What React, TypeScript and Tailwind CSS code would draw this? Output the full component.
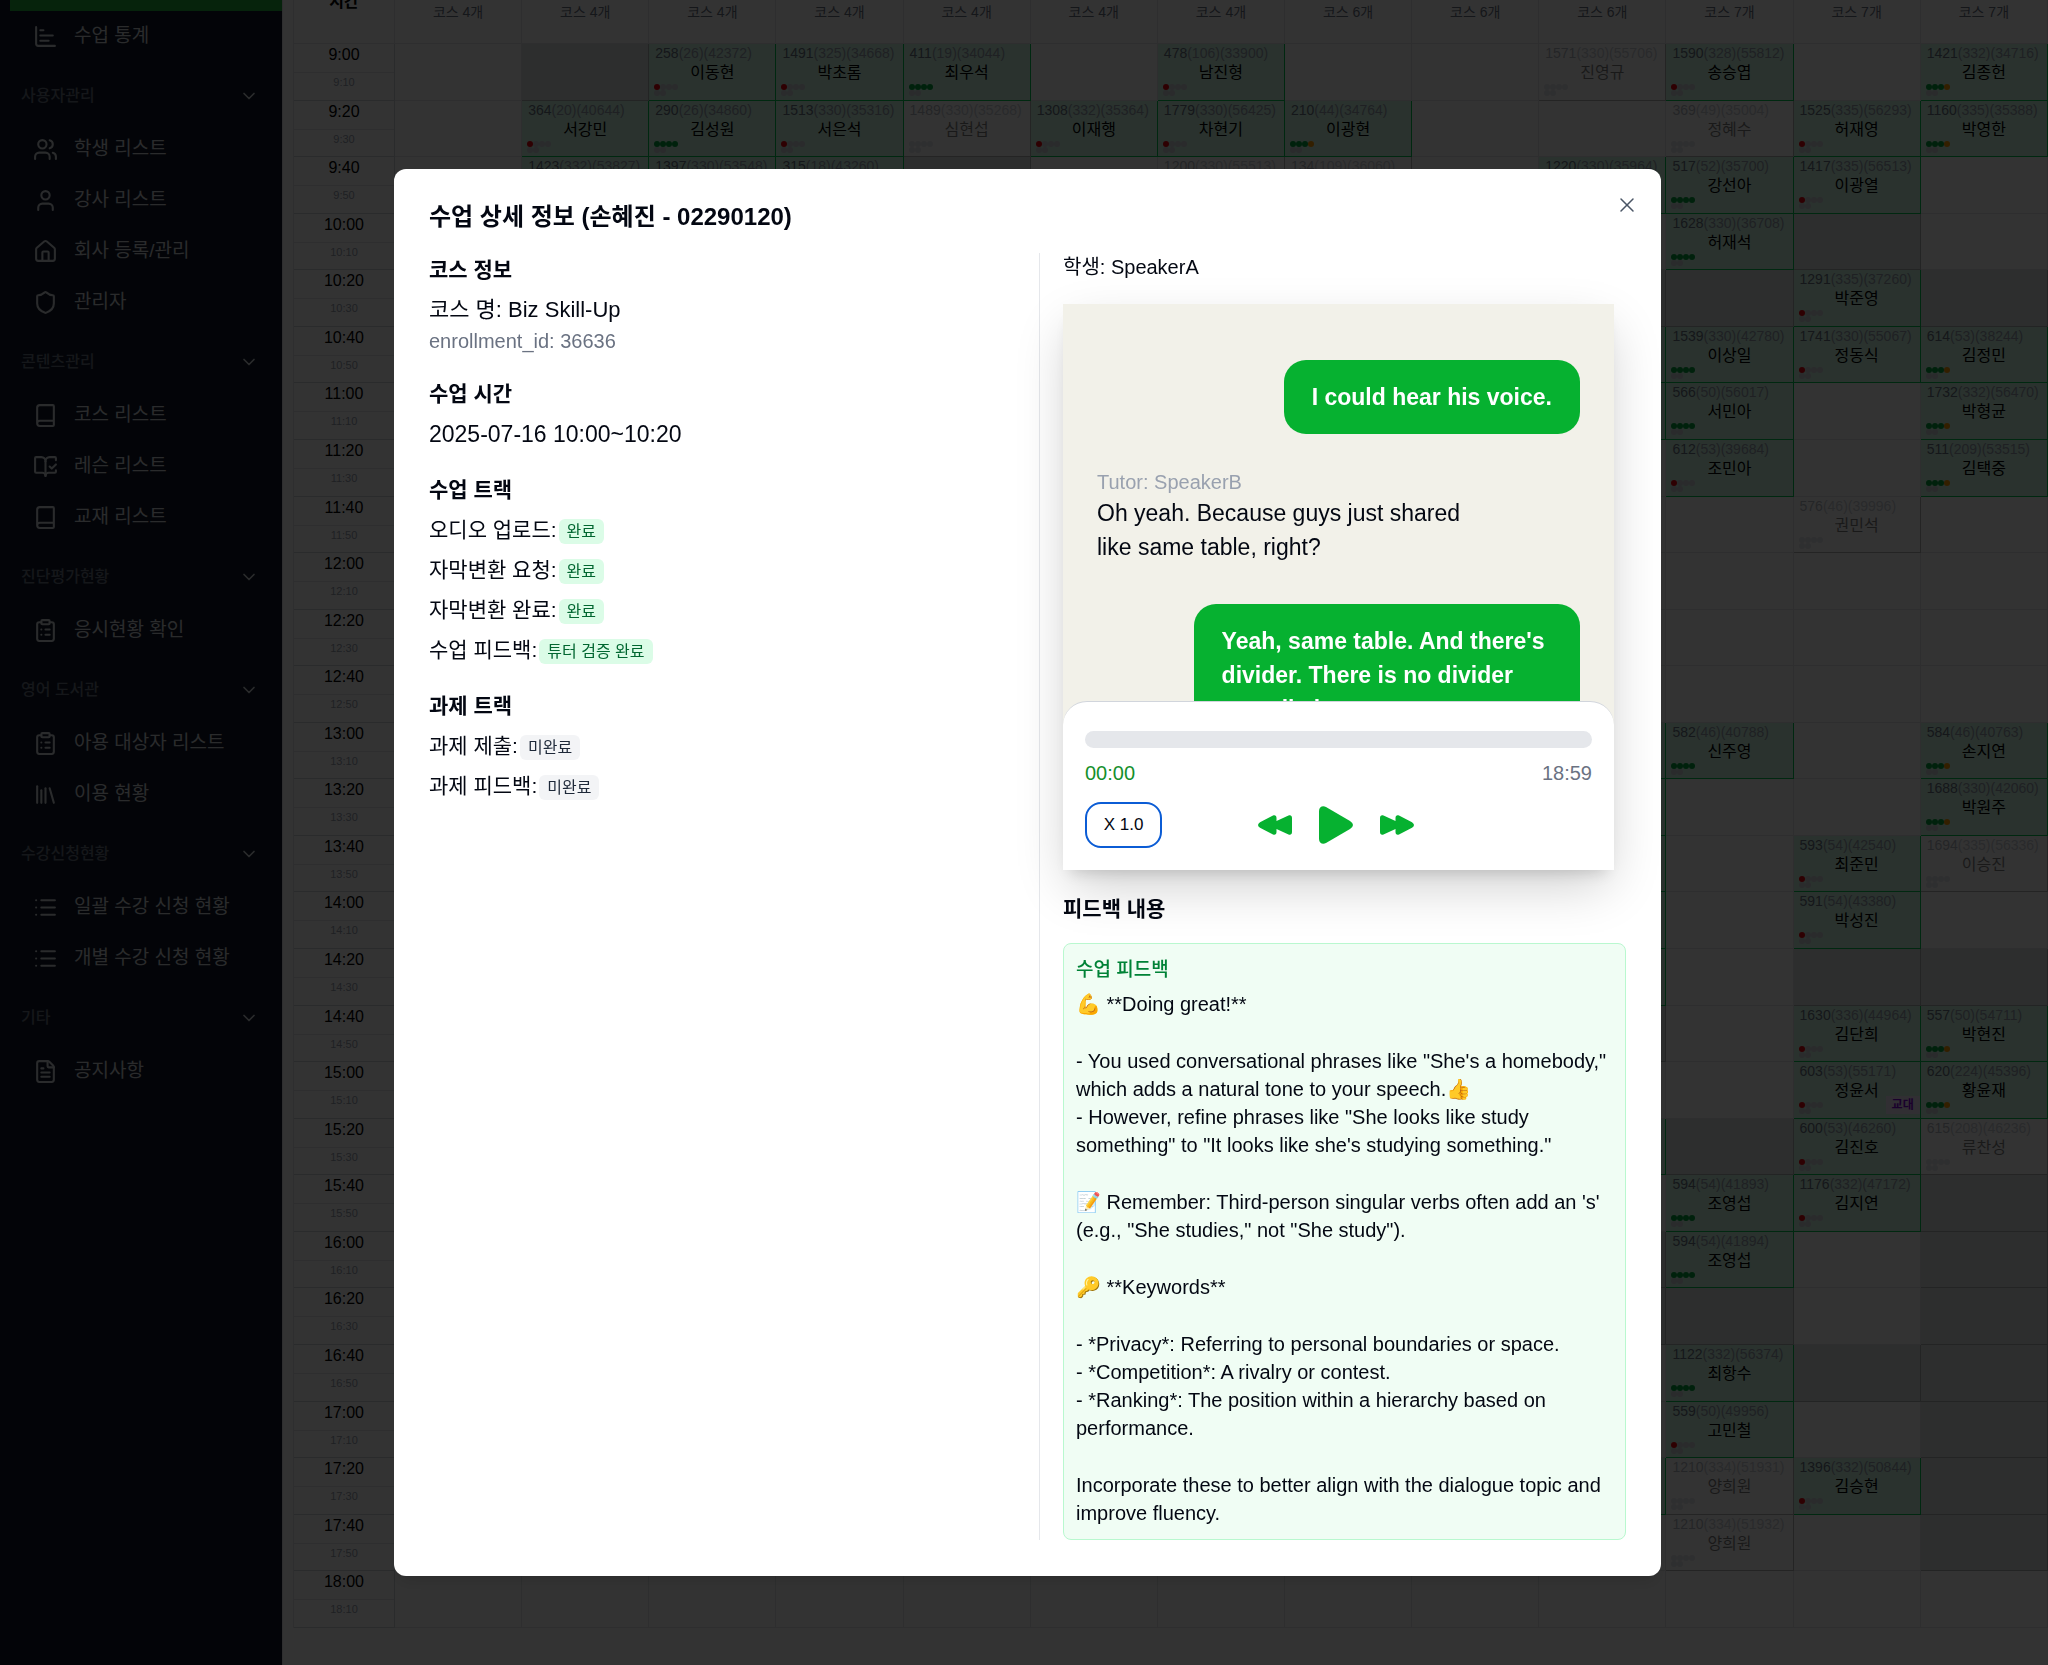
import React from "react";
import {
  BookOpenCheck,
  Book,
  ChartBar,
  ChevronDown,
  ClipboardList,
  FileText,
  House,
  Library,
  List,
  Shield,
  User,
  Users,
  X,
  type LucideIcon,
} from "lucide-react";

type Item = { label: string; icon: LucideIcon };
type Group = { title: string; items: Item[] };

const GROUPS: Group[] = [
  {
    title: "사용자관리",
    items: [
      { label: "학생 리스트", icon: Users },
      { label: "강사 리스트", icon: User },
      { label: "회사 등록/관리", icon: House },
      { label: "관리자", icon: Shield },
    ],
  },
  {
    title: "콘텐츠관리",
    items: [
      { label: "코스 리스트", icon: Book },
      { label: "레슨 리스트", icon: BookOpenCheck },
      { label: "교재 리스트", icon: Book },
    ],
  },
  { title: "진단평가현황", items: [{ label: "응시현황 확인", icon: ClipboardList }] },
  {
    title: "영어 도서관",
    items: [
      { label: "아용 대상자 리스트", icon: ClipboardList },
      { label: "이용 현황", icon: Library },
    ],
  },
  {
    title: "수강신청현황",
    items: [
      { label: "일괄 수강 신청 현황", icon: List },
      { label: "개별 수강 신청 현황", icon: List },
    ],
  },
  { title: "기타", items: [{ label: "공지사항", icon: FileText }] },
];

function NavItem({ item }: { item: Item }) {
  const Icon = item.icon;
  return (
    <a href="#" className="flex h-[51px] items-center gap-4 pl-[33px] text-[19px] text-gray-300">
      <Icon size={25} strokeWidth={2} />
      <span>{item.label}</span>
    </a>
  );
}

function Sidebar() {
  return (
    <nav className="w-[282px] shrink-0 bg-gray-900">
      <div className="ml-[10px] h-[11px] bg-[#22b03c]" />
      <NavItem item={{ label: "수업 통계", icon: ChartBar }} />
      {GROUPS.map((g) => (
        <section key={g.title} className="mt-5">
          <button className="mb-[14px] flex h-7 w-full items-center justify-between pr-[23px] pl-[21px] text-[16px] font-medium text-gray-500">
            <span>{g.title}</span>
            <ChevronDown size={20} className="text-gray-300" />
          </button>
          {g.items.map((i) => (
            <NavItem key={i.label} item={i} />
          ))}
        </section>
      ))}
    </nav>
  );
}

type Status = "red" | "green" | "orange" | "muted" | "off" | "filled";
type Slot = { s: Status; id?: string; rest?: string; name?: string; tag?: string };

const lesson = (s: Status, id: string, rest: string, name?: string, tag?: string): Slot => ({ s, id, rest, name, tag });
const off: Slot = { s: "off" };
const filled: Slot = { s: "filled" };

const COLUMNS: { courses: number; slots: Record<number, Slot> }[] = [
  { courses: 4, slots: {} },
  {
    courses: 4,
    slots: {
      0: off,
      1: lesson("red", "364", "(20)(40644)", "서강민"),
      2: lesson("filled", "1423", "(332)(53827)"),
    },
  },
  {
    courses: 4,
    slots: {
      0: lesson("red", "258", "(26)(42372)", "이동현"),
      1: lesson("green", "290", "(26)(34860)", "김성원"),
      2: lesson("filled", "1397", "(330)(53548)"),
    },
  },
  {
    courses: 4,
    slots: {
      0: lesson("red", "1491", "(325)(34668)", "박초롬"),
      1: lesson("red", "1513", "(330)(35316)", "서은석"),
      2: lesson("filled", "315", "(18)(43260)"),
    },
  },
  {
    courses: 4,
    slots: {
      0: lesson("green", "411", "(19)(34044)", "최우석"),
      1: lesson("muted", "1489", "(330)(35268)", "심현섭"),
      2: off,
    },
  },
  { courses: 4, slots: { 1: lesson("red", "1308", "(332)(35364)", "이재행") } },
  {
    courses: 4,
    slots: {
      0: lesson("red", "478", "(106)(33900)", "남진형"),
      1: lesson("red", "1779", "(330)(56425)", "차현기"),
      2: lesson("muted", "1200", "(330)(55513)"),
    },
  },
  {
    courses: 6,
    slots: {
      1: lesson("orange", "210", "(44)(34764)", "이광현"),
      2: lesson("muted", "134", "(109)(36060)"),
    },
  },
  { courses: 6, slots: {} },
  {
    courses: 6,
    slots: {
      0: lesson("muted", "1571", "(330)(55706)", "진영규"),
      2: lesson("filled", "1220", "(330)(35964)"),
      4: off,
      5: filled,
      6: filled,
      12: filled,
      13: filled,
      14: filled,
      15: filled,
      16: filled,
      17: off,
      19: filled,
      21: off,
      22: off,
      25: filled,
    },
  },
  {
    courses: 7,
    slots: {
      0: lesson("red", "1590", "(328)(55812)", "송승엽"),
      1: lesson("muted", "369", "(49)(35004)", "정혜수"),
      2: lesson("green", "517", "(52)(35700)", "강선아"),
      3: lesson("green", "1628", "(330)(36708)", "허재석"),
      4: off,
      5: lesson("green", "1539", "(330)(42780)", "이상일"),
      6: lesson("green", "566", "(50)(56017)", "서민아"),
      7: lesson("red", "612", "(53)(39684)", "조민아"),
      12: lesson("green", "582", "(46)(40788)", "신주영"),
      19: off,
      20: lesson("green", "594", "(54)(41893)", "조영섭"),
      21: lesson("green", "594", "(54)(41894)", "조영섭"),
      22: off,
      23: lesson("green", "1122", "(332)(56374)", "최항수"),
      24: lesson("red", "559", "(50)(49956)", "고민철"),
      25: lesson("muted", "1210", "(334)(51931)", "양희원"),
      26: lesson("muted", "1210", "(334)(51932)", "양희원"),
    },
  },
  {
    courses: 7,
    slots: {
      1: lesson("red", "1525", "(335)(56293)", "허재영"),
      2: lesson("red", "1417", "(335)(56513)", "이광열"),
      3: off,
      4: lesson("red", "1291", "(335)(37260)", "박준영"),
      5: lesson("red", "1741", "(330)(55067)", "정동식"),
      8: lesson("muted", "576", "(46)(39996)", "권민석"),
      14: lesson("red", "593", "(54)(42540)", "최준민"),
      15: lesson("red", "591", "(54)(43380)", "박성진"),
      16: off,
      17: lesson("red", "1630", "(336)(44964)", "김단희"),
      18: lesson("red", "603", "(53)(55171)", "정윤서", "교대"),
      19: lesson("red", "600", "(53)(46260)", "김진호"),
      20: lesson("red", "1176", "(332)(47172)", "김지연"),
      23: off,
      25: lesson("red", "1396", "(332)(50844)", "김승현"),
    },
  },
  {
    courses: 7,
    slots: {
      0: lesson("orange", "1421", "(332)(34716)", "김종헌"),
      1: lesson("orange", "1160", "(335)(35388)", "박영한"),
      4: off,
      5: lesson("orange", "614", "(53)(38244)", "김정민"),
      6: lesson("orange", "1732", "(332)(56470)", "박형균"),
      7: lesson("orange", "511", "(209)(53515)", "김택중"),
      12: lesson("orange", "584", "(46)(40763)", "손지연"),
      13: lesson("orange", "1688", "(330)(42060)", "박원주"),
      14: lesson("muted", "1694", "(335)(56336)", "이승진"),
      16: off,
      17: lesson("orange", "557", "(50)(54711)", "박현진"),
      18: lesson("orange", "620", "(224)(45396)", "황윤재"),
      19: lesson("muted", "615", "(208)(46236)", "류찬성"),
      20: off,
      21: off,
      22: off,
      23: off,
      24: off,
      25: off,
      26: off,
    },
  },
];

const ROWS = Array.from({ length: 28 }, (_, i) => {
  const hour = 9 + Math.floor(i / 3);
  const min = (i % 3) * 2;
  return { major: `${hour}:${min}0`, minor: `${hour}:${min + 1}0` };
});

const DOTS: Record<Status, string[]> = {
  red: ["bg-red-600", "bg-gray-300", "bg-gray-300", "bg-gray-300"],
  green: ["bg-green-600", "bg-green-600", "bg-green-600", "bg-green-600"],
  orange: ["bg-green-600", "bg-green-600", "bg-green-600", "bg-amber-500"],
  muted: ["bg-gray-300", "bg-gray-300", "bg-gray-300", "bg-gray-300"],
  off: [],
  filled: [],
};

function cellClass(slot?: Slot) {
  if (!slot) return "border-gray-200";
  if (slot.s === "off") return "border-[#aeb5b2] bg-[#dfe6e3]";
  if (slot.s === "muted") return "border-[#b4b4b4]";
  return "border-green-500 bg-emerald-100";
}

function Lesson({ slot }: { slot: Slot }) {
  const muted = slot.s === "muted";
  return (
    <div className={muted ? "relative opacity-50" : "relative"}>
      <div className="pt-px pl-[6px] text-[14px] leading-[17px] whitespace-nowrap text-gray-500">
        {slot.id}
        <span className="text-gray-400">{slot.rest}</span>
      </div>
      {slot.name && (
        <>
          <div className="text-center text-[16px] leading-[22px] text-black">{slot.name}</div>
          <div className="ml-[5px] flex w-6 flex-wrap">
            {DOTS[slot.s].map((c, i) => (
              <span key={i} className={`${c} h-[6px] w-[6px] rounded-full`} />
            ))}
            <span className="h-[6px] w-[6px] rounded-full bg-gray-300" />
            <span className="h-[6px] w-[6px] rounded-full bg-gray-300" />
          </div>
        </>
      )}
      {slot.tag && (
        <span className="absolute right-0 bottom-0 bg-purple-100 px-[6px] text-[12px] leading-[18px] font-bold text-purple-700">
          {slot.tag}
        </span>
      )}
    </div>
  );
}

function Schedule() {
  return (
    <main className="min-w-0 flex-1 overflow-hidden border-l border-gray-200 bg-white pr-1 pl-[10px]">
      <table className="h-[calc(100vh-37px)] w-[calc(100%+4px)] table-fixed border-separate border-spacing-0 border-l border-gray-200">
        <thead>
          <tr className="h-[44px]">
            <th scope="col" className="w-[101px] border-r border-b border-gray-200 p-0 align-top text-[16px] font-semibold">
              <div className="h-[43px] overflow-hidden">
                <div className="-mt-[10px] leading-[24px]">시간</div>
              </div>
            </th>
            {COLUMNS.map((c, i) => (
              <th
                key={i}
                scope="col"
                className="border-r border-b border-gray-200 p-0 pt-[2px] align-top text-[14px] leading-5 font-normal text-gray-500"
              >
                코스 {c.courses}개
              </th>
            ))}
          </tr>
        </thead>
        <tbody>
          {ROWS.map((r, ri) => (
            <tr key={r.major}>
              <th scope="row" className="border-r border-b border-gray-300 p-0 align-top font-normal">
                <div className="h-[29px] border-b border-gray-200 pt-[2px] text-[16px] leading-[18px] text-black">{r.major}</div>
                <div className="h-6 pt-[2px] text-[11px] leading-[14px] text-gray-400">{r.minor}</div>
              </th>
              {COLUMNS.map((c, ci) => {
                const slot = c.slots[ri];
                return (
                  <td key={ci} className={`overflow-hidden border-r border-b p-0 align-top ${cellClass(slot)}`}>
                    {slot?.id && <Lesson slot={slot} />}
                  </td>
                );
              })}
            </tr>
          ))}
        </tbody>
      </table>
    </main>
  );
}

function Badge({ done, children }: { done?: boolean; children: React.ReactNode }) {
  return (
    <span
      className={
        done
          ? "mt-[2px] rounded-md bg-green-100 px-2 text-[16px] leading-[25px] text-green-800"
          : "mt-[2px] rounded-md bg-gray-100 px-2 text-[16px] leading-[25px] text-gray-800"
      }
    >
      {children}
    </span>
  );
}

function Section({ title, children }: { title: string; children: React.ReactNode }) {
  return (
    <section>
      <h3 className="mb-[6px] text-[21px] leading-[34px] font-semibold">{title}</h3>
      {children}
    </section>
  );
}

const LESSON_TRACK = [
  ["오디오 업로드:", "완료"],
  ["자막변환 요청:", "완료"],
  ["자막변환 완료:", "완료"],
  ["수업 피드백:", "튜터 검증 완료"],
];
const TASK_TRACK = [
  ["과제 제출:", "미완료"],
  ["과제 피드백:", "미완료"],
];

function Track({ rows, done }: { rows: string[][]; done?: boolean }) {
  return (
    <ul className="flex flex-col gap-[6px] text-[21px] leading-[34px]">
      {rows.map(([label, state]) => (
        <li key={label} className="flex items-center gap-[2px]">
          <span>{label}</span>
          <Badge done={done}>{state}</Badge>
        </li>
      ))}
    </ul>
  );
}

function PlayIcon() {
  return (
    <svg width="34" height="38" viewBox="0 0 34 38" fill="#06b130">
      <path d="M0 5C0 1 3.500-.8 7 1L31 15Q37 19 31 23L7 37C3.500 38.800 0 37 0 33Z" />
    </svg>
  );
}

function SkipIcon({ back }: { back?: boolean }) {
  return (
    <svg width="34" height="20" viewBox="0 0 34 20" fill="#06b130" className={back ? "rotate-180" : ""}>
      <path d="M0 3C0 .8 1.500-.3 3.500.6L15.500 6V3C15.500.8 17-.3 19 .6L32 7.200Q36 10 32 12.800L19 19.400C17 20.300 15.500 19.200 15.500 17V14L3.500 19.400C1.500 20.300 0 19.200 0 17Z" />
    </svg>
  );
}

function Player() {
  return (
    <div className="mt-auto rounded-t-3xl border-t border-gray-300 bg-white px-[22px] pt-[29px] pb-[22px]">
      <div role="progressbar" aria-label="재생 위치" aria-valuenow={0} className="h-[17px] rounded-full bg-gray-200" />
      <div className="mt-[11px] flex justify-between text-[20px] leading-7">
        <span className="text-[#15902c]">00:00</span>
        <span className="text-gray-500">18:59</span>
      </div>
      <div className="mt-[15px] grid grid-cols-[1fr_auto_1fr] items-center">
        <button className="h-[46px] w-[77px] rounded-2xl border-2 border-[#0b5cd5] text-[17px]">X 1.0</button>
        <div className="flex items-center gap-[27px] pr-[5px]">
          <button aria-label="뒤로">
            <SkipIcon back />
          </button>
          <button aria-label="재생">
            <PlayIcon />
          </button>
          <button aria-label="앞으로">
            <SkipIcon />
          </button>
        </div>
      </div>
    </div>
  );
}

function Bubble({ children }: { children: React.ReactNode }) {
  return (
    <div className="max-w-[80%] self-end rounded-[22px] bg-[#06b130] px-7 py-5 text-[23px] leading-[34px] font-bold text-white">
      {children}
    </div>
  );
}

function Chat() {
  return (
    <div className="mr-3 flex h-[566px] flex-col bg-[#f2f1e9] shadow-[0_20px_50px_-6px_rgba(0,0,0,0.2),0_10px_14px_-8px_rgba(0,0,0,0.15)]">
      <div className="flex h-[397px] flex-col overflow-hidden px-[34px] pt-14">
        <Bubble>I could hear his voice.</Bubble>
        <div className="mt-[34px] mb-[40px] max-w-[80%]">
          <p className="text-[20px] leading-[28px] text-gray-400">Tutor: SpeakerB</p>
          <p className="text-[23px] leading-[34px]">Oh yeah. Because guys just shared like same table, right?</p>
        </div>
        <Bubble>Yeah, same table. And there's divider. There is no divider actually but</Bubble>
      </div>
      <Player />
    </div>
  );
}

const FEEDBACK = [
  "💪 **Doing great!**",
  "- You used conversational phrases like \"She's a homebody,\" which adds a natural tone to your speech.👍\n- However, refine phrases like \"She looks like study something\" to \"It looks like she's studying something.\"",
  "📝 Remember: Third-person singular verbs often add an 's' (e.g., \"She studies,\" not \"She study\").",
  "🔑 **Keywords**",
  "- *Privacy*: Referring to personal boundaries or space.\n- *Competition*: A rivalry or contest.\n- *Ranking*: The position within a hierarchy based on performance.",
  "Incorporate these to better align with the dialogue topic and improve fluency.",
];

function Dialog() {
  return (
    <div className="fixed inset-0 flex items-start justify-center bg-black/80 pt-[169px] pl-[7px]">
      <div
        role="dialog"
        aria-labelledby="lesson-title"
        className="relative w-full max-w-[1267px] rounded-xl bg-white px-[35px] pt-[34px] pb-[36px] text-gray-950 shadow-lg"
      >
        <button aria-label="닫기" className="absolute top-6 right-[22px] text-gray-600">
          <X size={24} strokeWidth={1.5} />
        </button>
        <h2 id="lesson-title" className="text-[24px] leading-7 font-semibold">
          수업 상세 정보 (손혜진 - 02290120)
        </h2>
        <div className="mt-[22px] grid grid-cols-2 gap-[23px]">
          <div className="flex flex-col gap-[22px]">
            <Section title="코스 정보">
              <p className="text-[22px] leading-[34px]">코스 명: Biz Skill-Up</p>
              <p className="text-[20px] leading-7 text-gray-500">enrollment_id: 36636</p>
            </Section>
            <Section title="수업 시간">
              <p className="text-[23px] leading-[34px]">2025-07-16 10:00~10:20</p>
            </Section>
            <Section title="수업 트랙">
              <Track rows={LESSON_TRACK} done />
            </Section>
            <Section title="과제 트랙">
              <Track rows={TASK_TRACK} />
            </Section>
          </div>
          <div className="border-l border-gray-200 pl-[23px]">
            <p className="mb-[23px] text-[20px] leading-7">학생: SpeakerA</p>
            <Chat />
            <h3 className="mt-[22px] text-[21px] leading-[34px] font-semibold">피드백 내용</h3>
            <div className="mt-[17px] rounded-lg border border-green-200 bg-green-50 px-3 py-3">
              <h4 className="mb-[6px] text-[19px] leading-7 font-medium text-green-700">수업 피드백</h4>
              <div className="flex flex-col gap-[29px] text-[20px] leading-7 whitespace-pre-line">
                {FEEDBACK.map((p) => (
                  <p key={p}>{p}</p>
                ))}
              </div>
            </div>
          </div>
        </div>
      </div>
    </div>
  );
}

export default function App() {
  return (
    <div className="flex min-h-screen overflow-hidden font-['Liberation_Sans','Noto_Sans_CJK_KR',sans-serif]">
      <Sidebar />
      <Schedule />
      <Dialog />
    </div>
  );
}
